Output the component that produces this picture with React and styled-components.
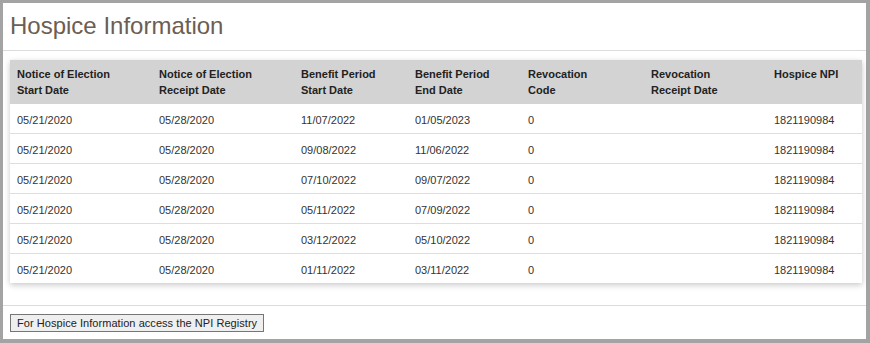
import React from "react";
import styled, { createGlobalStyle } from "styled-components";

const Global = createGlobalStyle`
  html, body { margin: 0; padding: 0; background: #fff; }
  body { font-family: "Liberation Sans", Arial, sans-serif; }
`;

const Frame = styled.div`
  box-sizing: border-box;
  width: 870px;
  height: 343px;
  border-style: solid;
  border-color: #a3a3a3;
  border-width: 3px 4px 4px 3px;
  display: flex;
  flex-direction: column;
  background: #fff;
`;

const Header = styled.div`
  height: 49px;
  display: flex;
  align-items: center;
  padding: 0 7px;
  border-bottom: 1px solid #dcdcdc;
`;

const Title = styled.h1`
  margin: 0;
  font-family: "Liberation Sans", Arial, sans-serif;
  font-weight: normal;
  font-size: 24px;
  color: #6b5e53;
  line-height: 1;
  margin-top: -2px;
`;

const Body = styled.div`
  padding: 9px 4px 22px 7px;
  border-bottom: 1px solid #dcdcdc;
`;

const Table = styled.table`
  width: 100%;
  border-collapse: collapse;
  table-layout: fixed;
  box-shadow: 0 2px 6px rgba(0, 0, 0, 0.22);
  font-size: 11px;
  color: #333;
`;

const Th = styled.th`
  box-sizing: border-box;
  background: #d3d3d3;
  text-align: left;
  vertical-align: top;
  font-weight: bold;
  color: #222;
  line-height: 16px;
  padding: 6px 7px 6px;
  width: ${(p) => (p.$w ? `${p.$w}px` : "auto")};
`;

const Td = styled.td`
  padding: 10px 7px 6px;
  line-height: 13px;
  white-space: nowrap;
  border-top: ${(p) => (p.$first ? "none" : "1px solid #dedede")};
`;

const Footer = styled.div`
  padding: 7px 7px;
`;

const Button = styled.button`
  font-family: "Liberation Sans", Arial, sans-serif;
  font-size: 11px;
  color: #222;
  background: #efefef;
  border: 1px solid #767676;
  border-radius: 0;
  height: 18px;
  padding: 0 6px;
  line-height: 16px;
  letter-spacing: 0.05px;
`;

const headers = [
  ["Notice of Election", "Start Date", 142],
  ["Notice of Election", "Receipt Date", 142],
  ["Benefit Period", "Start Date", 114],
  ["Benefit Period", "End Date", 113],
  ["Revocation", "Code", 123],
  ["Revocation", "Receipt Date", 123],
  ["Hospice NPI", null, null],
];

const rows = [
  ["11/07/2022", "01/05/2023"],
  ["09/08/2022", "11/06/2022"],
  ["07/10/2022", "09/07/2022"],
  ["05/11/2022", "07/09/2022"],
  ["03/12/2022", "05/10/2022"],
  ["01/11/2022", "03/11/2022"],
];

export default function App() {
  return (
    <>
      <Global />
      <Frame>
        <Header>
          <Title>Hospice Information</Title>
        </Header>
        <Body>
          <Table>
            <thead>
              <tr>
                {headers.map(([a, b, w], i) => (
                  <Th key={i} $w={w}>
                    {a}
                    {b && <br />}
                    {b}
                  </Th>
                ))}
              </tr>
            </thead>
            <tbody>
              {rows.map(([s, e], i) => (
                <tr key={i}>
                  <Td $first={i === 0}>05/21/2020</Td>
                  <Td $first={i === 0}>05/28/2020</Td>
                  <Td $first={i === 0}>{s}</Td>
                  <Td $first={i === 0}>{e}</Td>
                  <Td $first={i === 0}>0</Td>
                  <Td $first={i === 0}></Td>
                  <Td $first={i === 0}>1821190984</Td>
                </tr>
              ))}
            </tbody>
          </Table>
        </Body>
        <Footer>
          <Button>For Hospice Information access the NPI Registry</Button>
        </Footer>
      </Frame>
    </>
  );
}
